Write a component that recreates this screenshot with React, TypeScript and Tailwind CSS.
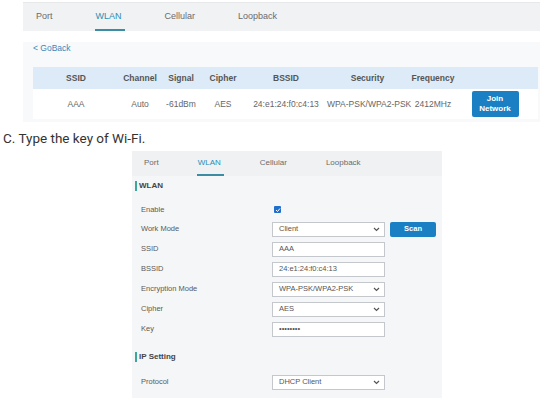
import React from "react";

const sans = { fontFamily: '"Liberation Sans", Arial, sans-serif' };

function Chevron() {
  return (
    <svg width="7" height="5" viewBox="0 0 7 5" className="shrink-0">
      <path d="M1 1 L3.5 3.5 L6 1" fill="none" stroke="#555" strokeWidth="1.2" />
    </svg>
  );
}

function TopTabs() {
  const tabs = ["Port", "WLAN", "Cellular", "Loopback"];
  return (
    <div className="h-[28px] bg-[#f0f2f4] flex items-stretch pl-[13px] gap-[43px] text-[9px] text-[#6b6b6b]">
      {tabs.map((t) => (
        <div key={t} className="relative flex items-center">
          <span className={t === "WLAN" ? "text-[#2b8fb3]" : ""}>{t}</span>
          {t === "WLAN" && (
            <div className="absolute left-[-1px] right-[-3px] bottom-0 h-[2px] bg-[#3c8da3]" />
          )}
        </div>
      ))}
    </div>
  );
}

function ScanTable() {
  const cols = "grid grid-cols-[86px_42px_40px_44px_82px_81px_50px_80px]";
  const heads = ["SSID", "Channel", "Signal", "Cipher", "BSSID", "Security", "Frequency", ""];
  const vals = ["AAA", "Auto", "-61dBm", "AES", "24:e1:24:f0:c4:13", "WPA-PSK/WPA2-PSK", "2412MHz"];
  return (
    <div className="w-[505px]">
      <div className={`${cols} h-[22px] bg-[#dcebf7] items-center text-[8.5px] font-bold text-[#555]`}>
        {heads.map((h, i) => (
          <div key={i} className="text-center whitespace-nowrap">{h}</div>
        ))}
      </div>
      <div className={`${cols} h-[30px] bg-white items-center text-[8.5px] text-[#666]`}>
        {vals.map((v, i) => (
          <div key={i} className="text-center whitespace-nowrap">{v}</div>
        ))}
        <div className="flex justify-center">
          <div className="w-[47px] h-[26px] ml-[-6px] rounded-[2px] bg-[#1a7fc3] text-white text-[8px] font-bold leading-[10px] flex flex-col items-center justify-center">
            <span>Join</span>
            <span>Network</span>
          </div>
        </div>
      </div>
    </div>
  );
}

function Heading({ label }: { label: string }) {
  return (
    <div className="h-[20px] flex items-center pl-[3px]">
      <div className="w-[2px] h-[10px] bg-[#3aa99a] mr-[2px]" />
      <span className="text-[8px] font-bold text-[#444]">{label}</span>
    </div>
  );
}

function Row({ label, children, h = "h-[20px]" }: { label: string; children: React.ReactNode; h?: string }) {
  return (
    <div className={`${h} flex items-center`}>
      <div className="w-[140px] pl-[9px] text-[7.5px] text-[#5a5a5a]">{label}</div>
      {children}
    </div>
  );
}

function TextBox({ value, select }: { value: string; select?: boolean }) {
  return (
    <div className="w-[113px] h-[15px] bg-white border border-[#c4c8cc] flex items-center justify-between pl-[6px] pr-[4px] text-[7.5px] text-[#555]">
      <span className="whitespace-nowrap">{value}</span>
      {select && <Chevron />}
    </div>
  );
}

function SettingsPanel() {
  const tabs = ["Port", "WLAN", "Cellular", "Loopback"];
  return (
    <div className="ml-[132px] w-[310px] bg-[#f5f6f7] pb-[6px]">
      <div className="h-[25px] bg-[#eff1f3] flex items-stretch pl-[12px] gap-[39px] text-[8px] text-[#6b6b6b]">
        {tabs.map((t) => (
          <div key={t} className="relative flex items-center pb-[2px]">
            <span className={t === "WLAN" ? "text-[#2b8fb3]" : ""}>{t}</span>
            {t === "WLAN" && (
              <div className="absolute left-[-1px] right-[-3px] bottom-0 h-[2px] bg-[#3c8da3]" />
            )}
          </div>
        ))}
      </div>
      <Heading label="WLAN" />
      <div className="mt-[4px]">
        <Row label="Enable" h="h-[19px]">
          <div className="w-[7px] h-[7px] ml-[2px] rounded-[1px] bg-[#1f6fd1] flex items-center justify-center">
            <svg width="6" height="6" viewBox="0 0 6 6">
              <path d="M1 3 L2.5 4.5 L5 1.5" fill="none" stroke="white" strokeWidth="1" />
            </svg>
          </div>
        </Row>
        <Row label="Work Mode">
          <TextBox value="Client" select />
          <div className="ml-[5px] w-[46px] h-[15px] rounded-[2px] bg-[#1a7fc3] text-white text-[7.5px] font-bold flex items-center justify-center">
            Scan
          </div>
        </Row>
        <Row label="SSID">
          <TextBox value="AAA" />
        </Row>
        <Row label="BSSID">
          <TextBox value="24:e1:24:f0:c4:13" />
        </Row>
        <Row label="Encryption Mode">
          <TextBox value="WPA-PSK/WPA2-PSK" select />
        </Row>
        <Row label="Cipher">
          <TextBox value="AES" select />
        </Row>
        <Row label="Key">
          <TextBox value="••••••••" />
        </Row>
      </div>
      <div className="mt-[8px]">
        <Heading label="IP Setting" />
      </div>
      <div className="mt-[5px]">
        <Row label="Protocol">
          <TextBox value="DHCP Client" select />
        </Row>
      </div>
    </div>
  );
}

export default function App() {
  return (
    <div className="w-[550px] h-[401px] bg-white overflow-hidden" style={sans}>
      <div className="ml-[23px] mt-[2px] w-[517px] border-t border-[#e6e8ea]">
        <TopTabs />
        <div className="bg-[#f8f9fa] pl-[10px] pb-[3px]">
          <div className="h-[12px] mt-[11px] flex items-center text-[8.5px] text-[#3d86b8]">&lt; GoBack</div>
          <div className="mt-[13px]">
            <ScanTable />
          </div>
        </div>
      </div>
      <div
        className="mt-[7px] ml-[3px] h-[19px] flex items-center text-[13.5px] text-[#333]"
        style={{ fontFamily: 'Roboto, "Liberation Sans", sans-serif' }}
      >
        C. Type the key of Wi-Fi.
      </div>
      <div className="mt-[3px]">
        <SettingsPanel />
      </div>
    </div>
  );
}
